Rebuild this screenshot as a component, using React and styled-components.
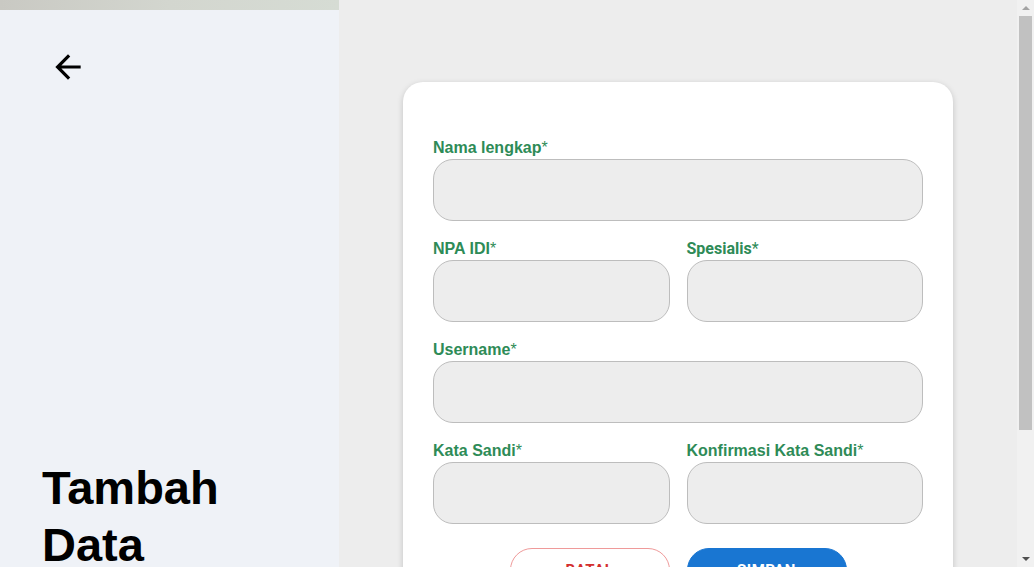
import React from "react";
import styled, { createGlobalStyle } from "styled-components";

const GlobalStyle = createGlobalStyle`
  html, body { margin: 0; padding: 0; }
  body { font-family: "Liberation Sans", Arial, sans-serif; background: #ededed; }
  * { box-sizing: border-box; }
`;

const Page = styled.div`
  display: flex;
  min-height: 100vh;
  margin-right: 17px;
`;

const SidePanel = styled.aside`
  width: 339px;
  flex: 0 0 339px;
  background: #eff2f7;
  display: flex;
  flex-direction: column;
`;

const TopStrip = styled.div`
  height: 10px;
  background: linear-gradient(90deg, #c9c9c3 0%, #d3d6cf 50%, #d6dcd4 100%);
`;

const SideContent = styled.div`
  padding: 38px 0 0 42px;
  display: flex;
  flex-direction: column;
  align-items: flex-start;
`;

const BackButton = styled.button`
  margin-left: 7px;
  padding: 0;
  border: 0;
  background: transparent;
  width: 38px;
  height: 38px;
  display: flex;
  cursor: pointer;
  svg { width: 38px; height: 38px; fill: #000; }
`;

const Title = styled.h1`
  margin: 373px 0 0 0;
  font-family: "Liberation Sans", Arial, sans-serif;
  font-weight: 700;
  font-size: 47px;
  line-height: 57px;
  color: #000;
  width: 230px;
`;

const Main = styled.main`
  flex: 1;
  background: #ededed;
  display: flex;
  justify-content: center;
  align-items: flex-start;
`;

const Card = styled.form`
  width: 550px;
  margin: 82px 0 82px 0;
  padding: 57px 30px 60px 30px;
  background: #fff;
  border-radius: 20px;
  box-shadow: 0 2px 6px rgba(0, 0, 0, 0.18);
  display: flex;
  flex-direction: column;
  gap: 19px;
`;

const Row = styled.div`
  display: grid;
  grid-template-columns: ${(p) => (p.$split ? "1fr 1fr" : "1fr")};
  column-gap: 17px;
`;

const Field = styled.div`
  display: flex;
  flex-direction: column;
`;

const Label = styled.label`
  font-family: ${(p) =>
    p.$roboto ? "Roboto, sans-serif" : '"Liberation Sans", Arial, sans-serif'};
  font-weight: 700;
  font-size: 16px;
  line-height: 18px;
  color: #2e8b57;
  margin-bottom: 2px;
  span { font-weight: 400; }
`;

const Input = styled.input`
  height: 62px;
  width: 100%;
  border: 1px solid #bdbdbd;
  border-radius: 20px;
  background: #ededed;
  padding: 0 16px;
  font-size: 16px;
  font-family: inherit;
  outline: none;
`;

const Actions = styled.div`
  display: flex;
  justify-content: center;
  gap: 17px;
  margin-top: 5px;
`;

const Button = styled.button`
  width: 160px;
  height: 44px;
  border-radius: 22px;
  font-family: Roboto, sans-serif;
  font-weight: 700;
  font-size: 15px;
  letter-spacing: 0.5px;
  cursor: pointer;
  border: 1px solid ${(p) => (p.$primary ? "#1976d2" : "#ef9a9a")};
  background: ${(p) => (p.$primary ? "#1976d2" : "#fff")};
  color: ${(p) => (p.$primary ? "#fff" : "#d32f2f")};
`;

const ScrollTrack = styled.div`
  position: fixed;
  top: 0;
  right: 0;
  width: 17px;
  height: 100vh;
  background: #f1f1f1;
  display: flex;
  flex-direction: column;
  align-items: center;
`;

const ScrollArrow = styled.div`
  height: 16px;
  width: 100%;
  display: flex;
  align-items: center;
  justify-content: center;
  &::after {
    content: "";
    border-left: 4px solid transparent;
    border-right: 4px solid transparent;
    ${(p) =>
      p.$down
        ? "border-top: 4px solid #505050;"
        : "border-bottom: 4px solid #a3a3a3;"}
  }
`;

const ScrollThumb = styled.div`
  width: 13px;
  height: 414px;
  background: #c1c1c1;
`;

const ScrollSpacer = styled.div`
  flex: 1;
`;

const FormField = ({ label, roboto, type = "text" }) => (
  <Field>
    <Label $roboto={roboto}>
      {label}
      <span>*</span>
    </Label>
    <Input type={type} />
  </Field>
);

export default function App() {
  return (
    <>
      <GlobalStyle />
      <Page>
        <SidePanel>
          <TopStrip />
          <SideContent>
            <BackButton type="button" aria-label="Kembali">
              <svg viewBox="0 0 24 24">
                <path d="M20 11H7.83l5.59-5.59L12 4l-8 8 8 8 1.41-1.41L7.83 13H20v-2z" />
              </svg>
            </BackButton>
            <Title>Tambah Data</Title>
          </SideContent>
        </SidePanel>
        <Main>
          <Card onSubmit={(e) => e.preventDefault()}>
            <Row>
              <FormField label="Nama lengkap" />
            </Row>
            <Row $split>
              <FormField label="NPA IDI" />
              <FormField label="Spesialis" roboto />
            </Row>
            <Row>
              <FormField label="Username" />
            </Row>
            <Row $split>
              <FormField label="Kata Sandi" type="password" />
              <FormField label="Konfirmasi Kata Sandi" type="password" />
            </Row>
            <Actions>
              <Button type="button">BATAL</Button>
              <Button type="submit" $primary>
                SIMPAN
              </Button>
            </Actions>
          </Card>
        </Main>
      </Page>
      <ScrollTrack aria-hidden="true">
        <ScrollArrow />
        <ScrollThumb />
        <ScrollSpacer />
        <ScrollArrow $down />
      </ScrollTrack>
    </>
  );
}
